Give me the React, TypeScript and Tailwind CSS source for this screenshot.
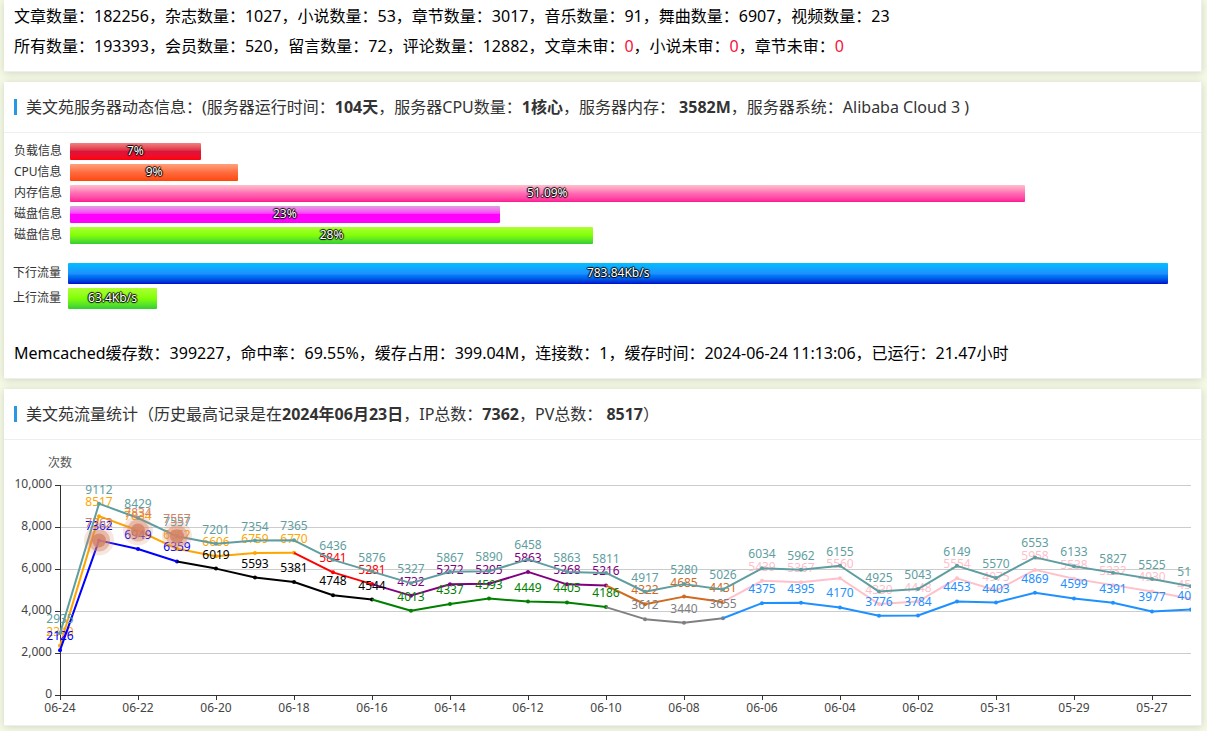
import type { ReactNode } from 'react';

const USAGE = [
  { label: '负载信息', value: 7, text: '7%', fill: 'bg-linear-to-b from-[#f08080] via-[#dc143c] to-[#ff0000]' },
  { label: 'CPU信息', value: 9, text: '9%', fill: 'bg-linear-to-b from-[#ffa07a] via-[#ff6b3d] to-[#ff4500]' },
  { label: '内存信息', value: 51.09, text: '51.09%', fill: 'bg-linear-to-b from-[#ffc0cb] via-[#ff69b4] to-[#ff1493]' },
  { label: '磁盘信息', value: 23, text: '23%', fill: 'bg-linear-to-b from-[#dda0dd] via-[#ff00ff] to-[#ff00ff]' },
  { label: '磁盘信息', value: 28, text: '28%', fill: 'bg-linear-to-b from-[#adff2f] via-[#7fff00] to-[#32cd32]' },
];

const TRAFFIC = [
  { label: '下行流量', value: 783.84, text: '783.84Kb/s', fill: 'bg-linear-to-b from-[#00bfff] via-[#1e90ff] to-[#0000cd]' },
  { label: '上行流量', value: 63.4, text: '63.4Kb/s', fill: 'bg-linear-to-b from-[#adff2f] via-[#7fff00] to-[#32cd32]' },
];

const USAGE_MAX = 60;
const TRAFFIC_MAX = 800;

const DATES = [
  '06-24', '06-22', '06-20', '06-18', '06-16', '06-14', '06-12', '06-10',
  '06-08', '06-06', '06-04', '06-02', '05-31', '05-29', '05-27',
];

// drawn in this order; each piece colours the points up to and including index `to`
const SERIES = [
  {
    name: 'pv',
    data: [
      2340, 8517, 7834, 6962, 6606, 6759, 6770, 5841, 5281, 4732, 5272, 5295, 5863, 5268, 5216,
      4322, 4685, 4431, 5439, 5367, 5560, 4330, 4448, 5554, 4975, 5958, 5538, 5232, 4930, 4585,
    ],
    pieces: [
      { to: 6, color: 'orange' },
      { to: 8, color: 'red' },
      { to: 14, color: 'purple' },
      { to: 17, color: 'chocolate' },
      { to: 29, color: 'pink' },
    ],
  },
  {
    name: 'ip',
    data: [
      2126, 7362, 6949, 6359, 6019, 5593, 5381, 4748, 4544, 4013, 4337, 4593, 4449, 4405, 4186,
      3612, 3440, 3655, 4375, 4395, 4170, 3776, 3784, 4453, 4403, 4869, 4599, 4391, 3977, 4071,
    ],
    pieces: [
      { to: 3, color: 'blue' },
      { to: 8, color: 'black' },
      { to: 14, color: 'green' },
      { to: 17, color: 'gray' },
      { to: 29, color: 'dodgerblue' },
    ],
  },
  {
    name: 'total',
    data: [
      2935, 9112, 8429, 7557, 7201, 7354, 7365, 6436, 5876, 5327, 5867, 5890, 6458, 5863, 5811,
      4917, 5280, 5026, 6034, 5962, 6155, 4925, 5043, 6149, 5570, 6553, 6133, 5827, 5525, 5180,
    ],
    pieces: [{ to: 29, color: 'cadetblue' }],
  },
];

const PEAKS = [
  { index: 1, value: 7362 },
  { index: 2, value: 7834 },
  { index: 3, value: 7557 },
];

const LEFT = 46;
const BASE = 245;
const STEP = 39;

const px = (i: number) => LEFT + i * STEP;
const py = (v: number) => BASE - v * 0.021;

function Panel({ title, children }: { title?: ReactNode; children: ReactNode }) {
  return (
    <section className="border-r border-b border-[#eee] bg-white shadow-[0_1px_8px_rgba(0,0,0,0.15)]">
      {title && (
        <header className="flex h-[51px] items-center gap-[9px] border-b border-[#eee] pl-2.5">
          <span className="h-4 w-[3px] bg-[#2897e4]" />
          <h2 className="whitespace-nowrap text-[#333]">{title}</h2>
        </header>
      )}
      {children}
    </section>
  );
}

function Bar({ width, text, fill }: { width: number; text: string; fill: string }) {
  return (
    <div
      className={`flex h-full items-center justify-center rounded-[1px] pb-0.5 text-white text-shadow-[1px_0_1px_#000,-1px_0_1px_#000,0_1px_1px_#000,0_-1px_1px_#000] ${fill}`}
      style={{ width: `${width}%` }}
    >
      {text}
    </div>
  );
}

function TrafficChart() {
  return (
    <svg className="block h-[275px] w-full text-xs" role="img" aria-label="流量统计">
      <text x={LEFT} y={17} textAnchor="middle" fill="#555">次数</text>

      {[0, 2000, 4000, 6000, 8000, 10000].map((v) => (
        <g key={v} shapeRendering="crispEdges">
          {v > 0 && <line x1={LEFT} x2="100%" y1={py(v) + 0.5} y2={py(v) + 0.5} stroke="#ccc" />}
          <line x1={LEFT - 5} x2={LEFT} y1={py(v) + 0.5} y2={py(v) + 0.5} stroke="#333" />
          <text x={LEFT - 8} y={py(v) + 3} textAnchor="end" fill="#444">{v.toLocaleString('en-US')}</text>
        </g>
      ))}
      <g stroke="#333" shapeRendering="crispEdges">
        <line x1={LEFT + 0.5} x2={LEFT + 0.5} y1={py(10000)} y2={BASE} />
        <line x1={LEFT} x2="100%" y1={BASE + 0.5} y2={BASE + 0.5} />
      </g>
      {DATES.map((d, i) => (
        <g key={d}>
          <line x1={px(i * 2) + 0.5} x2={px(i * 2) + 0.5} y1={BASE} y2={BASE + 5} stroke="#333" />
          <text x={px(i * 2)} y={BASE + 17} textAnchor="middle" fill="#444">{d}</text>
        </g>
      ))}

      {SERIES.map((s) => (
        <g key={s.name}>
          {s.pieces.map((p, n) => {
            const from = n === 0 ? 0 : s.pieces[n - 1].to;
            const points = s.data.slice(from, p.to + 1).map((v, k) => `${px(from + k)},${py(v)}`);
            const first = n === 0 ? 0 : from + 1;
            return (
              <g key={p.color} fill={p.color}>
                <polyline points={points.join(' ')} fill="none" stroke={p.color} strokeWidth={2} strokeLinejoin="bevel" />
                {s.data.slice(first, p.to + 1).map((v, k) => (
                  <g key={k}>
                    <circle cx={px(first + k)} cy={py(v)} r={2} />
                    <text x={px(first + k)} y={py(v) - 10} textAnchor="middle">{v}</text>
                  </g>
                ))}
              </g>
            );
          })}
        </g>
      ))}

      {PEAKS.map((p) => (
        <g key={p.index} fill="#d48265">
          <circle cx={px(p.index)} cy={py(p.value)} r={15} opacity={0.2} />
          <circle cx={px(p.index)} cy={py(p.value)} r={11} opacity={0.45} />
          <circle cx={px(p.index)} cy={py(p.value)} r={7} opacity={0.8} />
          <text x={px(p.index)} y={py(p.value) - 13} textAnchor="middle">{p.value}</text>
        </g>
      ))}
    </svg>
  );
}

export default function App() {
  return (
    <main className="flex min-h-screen flex-col gap-2.5 overflow-hidden bg-[#f5fae6] pr-[5px] pb-[5px] pl-1 font-['Noto_Sans','Noto_Sans_CJK_SC',sans-serif] text-base text-black">
      <Panel>
        <div className="px-2.5 pt-px pb-2.5 leading-[30px]">
          <p>文章数量：182256，杂志数量：1027，小说数量：53，章节数量：3017，音乐数量：91，舞曲数量：6907，视频数量：23</p>
          <p>
            所有数量：193393，会员数量：520，留言数量：72，评论数量：12882，文章未审：
            <span className="text-[#f5133b]">0</span>，小说未审：
            <span className="text-[#f5133b]">0</span>，章节未审：
            <span className="text-[#f5133b]">0</span>
          </p>
        </div>
      </Panel>

      <Panel
        title={
          <>
            美文苑服务器动态信息：(服务器运行时间：<b>104天</b>，服务器CPU数量：<b>1核心</b>，服务器内存： <b>3582M</b>，服务器系统：Alibaba Cloud 3 )
          </>
        }
      >
        <div className="flex flex-col gap-1 px-2.5 pt-2.5 text-xs text-[#333]">
          {USAGE.map((row, i) => (
            <div key={i} className="flex h-[17px] items-center">
              <span className="w-14 shrink-0 pb-0.5">{row.label}</span>
              <div className="h-full flex-1">
                <Bar width={(row.value / USAGE_MAX) * 100} text={row.text} fill={row.fill} />
              </div>
            </div>
          ))}
        </div>
        <div className="mt-[19px] flex flex-col gap-1 pr-2.5 pl-[9px] text-xs text-[#333]">
          {TRAFFIC.map((row) => (
            <div key={row.label} className="flex h-[21px] items-center">
              <span className="w-[55px] shrink-0 pb-0.5">{row.label}</span>
              <div className="h-full flex-1">
                <Bar width={(row.value / TRAFFIC_MAX) * 100} text={row.text} fill={row.fill} />
              </div>
            </div>
          ))}
        </div>
        <p className="mt-[29px] px-2.5 pb-2.5 leading-[30px]">
          Memcached缓存数：399227，命中率：69.55%，缓存占用：399.04M，连接数：1，缓存时间：2024-06-24 11:13:06，已运行：21.47小时
        </p>
      </Panel>

      <Panel
        title={
          <>
            美文苑流量统计（历史最高记录是在<b>2024年06月23日</b>，IP总数：<b>7362</b>，PV总数： <b>8517</b>）
          </>
        }
      >
        <div className="overflow-hidden px-2.5 pt-2.5">
          <TrafficChart />
        </div>
      </Panel>
    </main>
  );
}
